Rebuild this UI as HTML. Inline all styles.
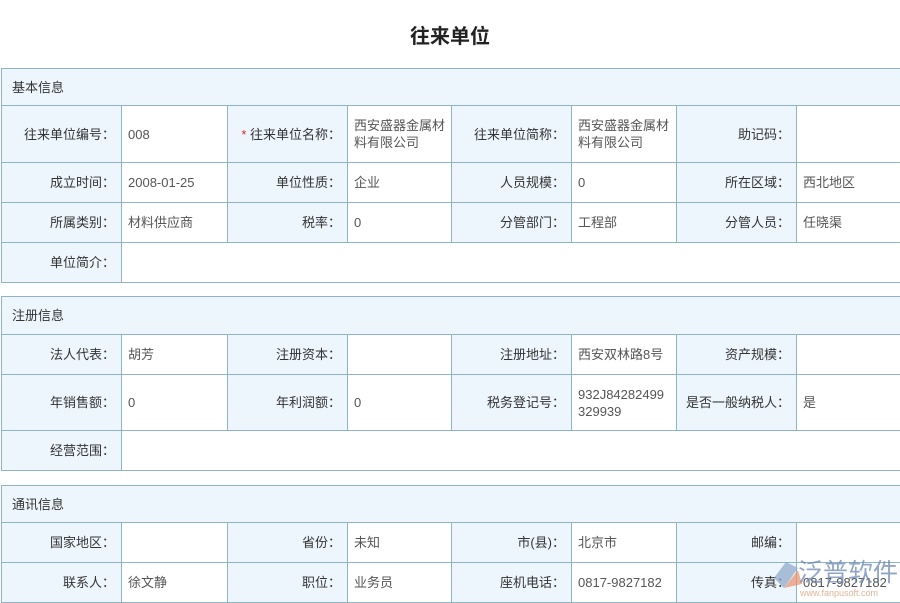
<!DOCTYPE html>
<html><head><meta charset="utf-8"><style>
html,body{margin:0;padding:0;width:900px;height:600px;overflow:hidden;background:#fff;font-family:"Liberation Sans","Noto Sans CJK SC",sans-serif;color:#333;font-size:13px}
h1{position:absolute;left:0;width:900px;top:22px;margin:0;text-align:center;font-size:20px;font-weight:bold;color:#222;line-height:30px}
table{position:absolute;left:1px;border-collapse:collapse;table-layout:fixed;width:920px}
td{border:1px solid #8db3c5;padding:0 6px;line-height:17px;vertical-align:middle;color:#555}
td.l{background:#eef6fd;text-align:right;padding-right:6px;color:#333}
td.h{background:#eef6fd;padding-left:10px;text-align:left;color:#333}
.s{color:#d9292b}
.wm{position:absolute;left:770px;top:552px;width:130px;height:48px}
</style></head><body>
<h1>往来单位</h1>
<table style="top:68px">
<colgroup><col style="width:120px"><col style="width:106px"><col style="width:120px"><col style="width:104px"><col style="width:120px"><col style="width:105px"><col style="width:120px"><col style="width:125px"></colgroup>
<tr style="height:37px"><td class="h" colspan="8">基本信息</td></tr>
<tr style="height:57px"><td class="l">往来单位编号：</td><td>008</td><td class="l"><span class="s">*</span> 往来单位名称：</td><td>西安盛器金属材料有限公司</td><td class="l">往来单位简称：</td><td>西安盛器金属材料有限公司</td><td class="l">助记码：</td><td></td></tr>
<tr style="height:40px"><td class="l">成立时间：</td><td>2008-01-25</td><td class="l">单位性质：</td><td>企业</td><td class="l">人员规模：</td><td>0</td><td class="l">所在区域：</td><td>西北地区</td></tr>
<tr style="height:40px"><td class="l">所属类别：</td><td>材料供应商</td><td class="l">税率：</td><td>0</td><td class="l">分管部门：</td><td>工程部</td><td class="l">分管人员：</td><td>任晓渠</td></tr>
<tr style="height:40px"><td class="l">单位简介：</td><td colspan="7"></td></tr>
</table>
<table style="top:296px">
<colgroup><col style="width:120px"><col style="width:106px"><col style="width:120px"><col style="width:104px"><col style="width:120px"><col style="width:105px"><col style="width:120px"><col style="width:125px"></colgroup>
<tr style="height:38px"><td class="h" colspan="8">注册信息</td></tr>
<tr style="height:40px"><td class="l">法人代表：</td><td>胡芳</td><td class="l">注册资本：</td><td></td><td class="l">注册地址：</td><td>西安双林路8号</td><td class="l">资产规模：</td><td></td></tr>
<tr style="height:56px"><td class="l">年销售额：</td><td>0</td><td class="l">年利润额：</td><td>0</td><td class="l">税务登记号：</td><td style="word-break:break-all">932J84282499329939</td><td class="l">是否一般纳税人：</td><td>是</td></tr>
<tr style="height:40px"><td class="l">经营范围：</td><td colspan="7"></td></tr>
</table>
<table style="top:485px">
<colgroup><col style="width:120px"><col style="width:106px"><col style="width:120px"><col style="width:104px"><col style="width:120px"><col style="width:105px"><col style="width:120px"><col style="width:125px"></colgroup>
<tr style="height:37px"><td class="h" colspan="8">通讯信息</td></tr>
<tr style="height:40px"><td class="l">国家地区：</td><td></td><td class="l">省份：</td><td>未知</td><td class="l">市(县)：</td><td>北京市</td><td class="l">邮编：</td><td></td></tr>
<tr style="height:40px"><td class="l">联系人：</td><td>徐文静</td><td class="l">职位：</td><td>业务员</td><td class="l">座机电话：</td><td>0817-9827182</td><td class="l">传真：</td><td>0817-9827182</td></tr>
</table>
<svg class="wm" viewBox="0 0 130 48"><path d="M4 26 L16 10 L28 16 L14 36 Z" fill="#8aa5c8" opacity=".7"/><path d="M14 36 L28 18 L32 32 Z" fill="#e8916a" opacity=".7"/><text x="28" y="29" font-size="25" fill="#6d87b3" opacity=".75" font-family="Noto Sans CJK SC,sans-serif">泛普软件</text><text x="30" y="44" font-size="9" fill="#c9834f" opacity=".6" font-family="Liberation Sans,sans-serif">www.fanpusoft.com</text></svg>
</body></html>
